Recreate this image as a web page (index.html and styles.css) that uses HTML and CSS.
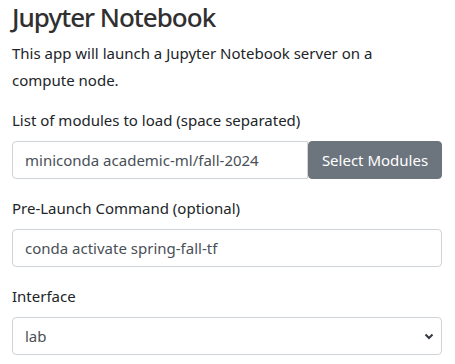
FILE: index.html
```html
<!DOCTYPE html>
<html>
<head>
  <title>Jupyter Notebook</title>
  <link rel="stylesheet" href="styles.css">
</head>
<body>
  <div class="app-form">
    <h2 class="app-title">Jupyter Notebook</h2>
    <p class="app-desc">This app will launch a Jupyter Notebook server on a compute node.</p>

    <div class="form-group">
      <label class="form-label" for="modules">List of modules to load (space separated)</label>
      <div class="input-group">
        <input class="form-input" type="text" id="modules" value="miniconda academic-ml/fall-2024">
        <button class="form-button" type="button">Select Modules</button>
      </div>
    </div>

    <div class="form-group">
      <label class="form-label" for="prelaunch">Pre-Launch Command (optional)</label>
      <input class="form-input" type="text" id="prelaunch" value="conda activate spring-fall-tf">
    </div>

    <div class="form-group">
      <label class="form-label" for="interface">Interface</label>
      <div class="select-wrap">
        <select class="form-input form-select" id="interface">
          <option value="lab">lab</option>
          <option value="notebook">notebook</option>
        </select>
        <svg class="select-arrow" width="10" height="7" viewBox="0 0 10 7">
          <path d="M1.5 1.5 L5 5 L8.5 1.5" fill="none" stroke="#343a40" stroke-width="2"/>
        </svg>
      </div>
    </div>
  </div>
</body>
</html>
```

FILE: styles.css
```css
body {
  margin: 0;
  font-family: "Noto Sans", "Open Sans", sans-serif;
  font-size: 15px;
  color: #212529;
  background: #fff;
}

.app-form {
  width: 430px;
  padding: 0 13px 0 12px;
}

.app-title {
  margin: 0 0 6px;
  font-size: 26px;
  font-weight: 500;
  letter-spacing: -1px;
  line-height: 34px;
  color: #303030;
}

.app-desc {
  max-width: 400px;
  margin: 0 0 13px;
  line-height: 27px;
}

.form-group {
  margin-bottom: 16px;
}

.form-label {
  display: block;
  line-height: 26px;
  margin-bottom: 8px;
}

.input-group {
  display: flex;
}

.form-input {
  box-sizing: border-box;
  display: block;
  width: 100%;
  height: 38px;
  padding: 6px 12px;
  font-family: inherit;
  font-size: 15px;
  color: #495057;
  background: #fff;
  border: 1px solid #ced4da;
  border-radius: 4px;
}

.input-group .form-input {
  flex: 1;
  min-width: 0;
  border-radius: 4px 0 0 4px;
}

.form-button {
  flex: none;
  width: 134px;
  height: 38px;
  padding: 6px 10px;
  white-space: nowrap;
  font-family: inherit;
  font-size: 15px;
  color: #fff;
  background-color: #6c757d;
  border: 1px solid #6c757d;
  border-radius: 4px;
}

.select-wrap {
  position: relative;
}

.form-select {
  appearance: none;
  -webkit-appearance: none;
}

.select-arrow {
  position: absolute;
  right: 8px;
  top: 16px;
}
```
